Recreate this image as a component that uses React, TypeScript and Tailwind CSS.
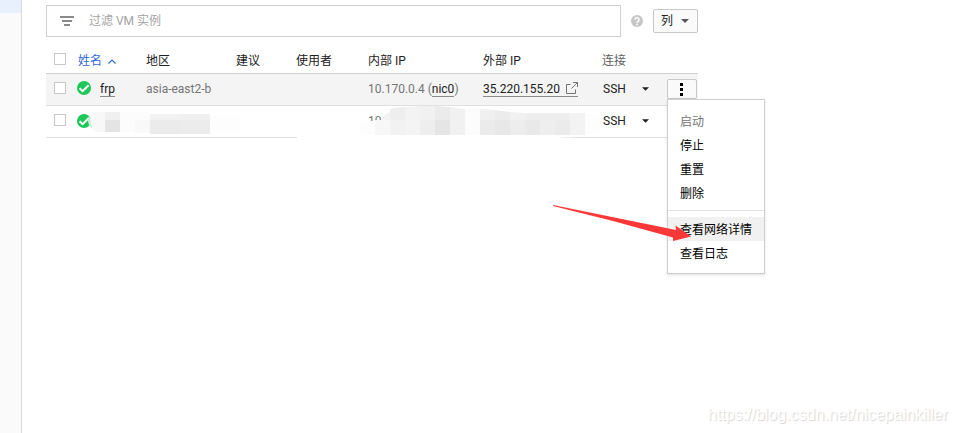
import { useState } from 'react';

interface Instance {
  id: string;
  name?: string;
  zone?: string;
  internalIp?: string;
  nic?: string;
  externalIp?: string;
}

const instances: Instance[] = [
  { id: 'vm-1', name: 'frp', zone: 'asia-east2-b', internalIp: '10.170.0.4', nic: 'nic0', externalIp: '35.220.155.20' },
  { id: 'vm-2', internalIp: '10' },
];

// x, y, width, height, fill
const maskTiles: [number, number, number, number, string][] = [
  [105, 112, 15, 8, '#f0f0f0'],
  [105, 120, 15, 12, '#e4e4e4'],
  [120, 112, 30, 20, '#fcfcfc'],
  [135, 120, 15, 13, '#f9f9f9'],
  [150, 114, 30, 6, '#f2f2f2'],
  [150, 120, 30, 14, '#ebebeb'],
  [180, 114, 30, 6, '#f0f0f0'],
  [180, 120, 30, 14, '#ececec'],
  [210, 115, 30, 18, '#fdfdfd'],
  [360, 121, 15, 14, '#fdfdfd'],
  [375, 120, 15, 15, '#f7f7f7'],
  [390, 120, 15, 15, '#f2f2f2'],
  [405, 120, 15, 15, '#f4f4f4'],
  [420, 120, 15, 15, '#eeeeee'],
  [435, 120, 15, 15, '#e5e5e5'],
  [450, 120, 15, 15, '#f1f1f1'],
  [465, 108, 15, 27, '#fcfcfc'],
  [480, 120, 15, 15, '#ebebeb'],
  [495, 120, 15, 15, '#e8e8e8'],
  [510, 120, 15, 15, '#ededed'],
  [525, 120, 15, 15, '#e9e9e9'],
  [540, 120, 15, 15, '#eeeeee'],
  [555, 120, 15, 15, '#ebebeb'],
  [570, 120, 15, 15, '#f3f3f3'],
];

function Check({ label }: { label: string }) {
  return (
    <input
      type="checkbox"
      aria-label={label}
      className="block h-3 w-3 appearance-none border border-[#c8c8c8] bg-white checked:bg-[#3367d6]"
    />
  );
}

function Caret({ className }: { className?: string }) {
  return (
    <svg viewBox="0 0 8 4" className={className} fill="currentColor" aria-hidden="true">
      <path d="M0 0h8L4 4z" />
    </svg>
  );
}

function RunningIcon() {
  return (
    <svg viewBox="0 0 14 14" className="block h-3.5 w-3.5 shrink-0" aria-label="正在运行">
      <circle cx="7" cy="7" r="7" fill="#1ec75a" />
      <path d="M2.600 7.200 5.600 10.200 11.600 4.200" fill="none" stroke="#fff" strokeWidth="2" />
    </svg>
  );
}

function RedactionMask() {
  return (
    <svg
      viewBox="46 104 652 38"
      className="pointer-events-none absolute -bottom-1 left-0 w-full"
      aria-hidden="true"
    >
      <path d="M297 121h279v16l-60 3H297z" fill="#fff" />
      <path d="M88 117q-1 7 4 12l2-12z" fill="#c9efd6" />
      <path d="M93 112h12v20h-9q-9-8-3-20z" fill="#f7f8f7" />
      <path d="M382 120q1-6 8-8v8z" fill="#f3f3f3" />
      <path d="M390 109q7-2 15-2v13h-15z" fill="#eeeeee" />
      <path d="M405 107l15-1v14h-15z" fill="#f3f3f3" />
      <path d="M420 106h15v14h-15z" fill="#f1f1f1" />
      <path d="M435 106l15 1v13h-15z" fill="#ebebeb" />
      <path d="M450 107l15 2v11h-15z" fill="#f1f1f1" />
      <path d="M480 109l15 1v10h-15z" fill="#f0f0f0" />
      <path d="M495 110l15 2v8h-15z" fill="#ececec" />
      <path d="M510 112l15 1v7h-15z" fill="#f1f1f1" />
      <path d="M525 113h45v7h-45z" fill="#eeeeee" />
      <path d="M570 113h15v7h-15z" fill="#f3f3f3" />
      <path d="M585 113l15 4v14l-15 4z" fill="#fdfdfd" />
      {maskTiles.map(([x, y, w, h, fill]) => (
        <rect key={`${x}-${y}`} x={x} y={y} width={w} height={h} fill={fill} />
      ))}
    </svg>
  );
}

function ActionsMenu() {
  const item = 'block h-6 w-full px-3 pt-0.5 text-left whitespace-nowrap hover:bg-[#f1f1f1]';
  return (
    <div role="menu" className="absolute top-full left-0 z-10 w-[98px] border border-[#d0d0d0] bg-white pt-[9px] pb-2 text-black shadow-sm">
      <button role="menuitem" disabled className="block h-6 w-full px-3 pt-0.5 text-left text-[#757575]">启动</button>
      <button role="menuitem" className={item}>停止</button>
      <button role="menuitem" className={item}>重置</button>
      <button role="menuitem" className={item}>删除</button>
      <hr className="mt-[5px] mb-1.5 border-[#e3e3e3]" />
      <button role="menuitem" className="block h-6 w-full bg-[#f1f1f1] px-3 pt-0.5 text-left whitespace-nowrap">查看网络详情</button>
      <button role="menuitem" className={item}>查看日志</button>
    </div>
  );
}

function InstanceRow({ vm, menuOpen, onToggle }: { vm: Instance; menuOpen: boolean; onToggle: () => void }) {
  const link = 'inline-block h-4 border-b border-[#8a8a8a] leading-4 text-[#212121]';
  return (
    <tr className={`h-8 border-b border-[#e0e0e0] text-[#757575] ${vm.name ? 'bg-[#f4f4f4]' : ''}`}>
      <td className="p-0 pb-0.5 pl-2"><Check label={vm.name ?? '实例'} /></td>
      <td className="p-0">
        <div className="-ml-px flex items-start gap-[9px]">
          <RunningIcon />
          {vm.name && <a href="#frp" className={link}>{vm.name}</a>}
        </div>
      </td>
      <td className="p-0">{vm.zone}</td>
      <td className="p-0" />
      <td className="p-0" />
      <td className="p-0 whitespace-nowrap">
        {vm.internalIp}
        {vm.nic && <> (<a href="#nic0" className={link}>{vm.nic}</a>)</>}
      </td>
      <td className="p-0">
        {vm.externalIp && (
          <a href="#external" className={`${link} whitespace-nowrap`}>
            {vm.externalIp}
            <svg viewBox="0 0 12 12" className="ml-1.5 inline-block h-3 w-3 -translate-y-0.5" fill="none" stroke="#757575" aria-hidden="true">
              <path d="M4.5 2.5h-4v9h9v-4M7 .5h4.5V5M11.5.5l-6 6" />
            </svg>
          </a>
        )}
      </td>
      <td className="p-0 pl-px">
        <button className="flex items-center gap-4 text-[#212121]">
          SSH
          <Caret className="h-1 w-[7px]" />
        </button>
      </td>
      <td className="p-0">
        {vm.name && (
          <div className="relative">
            <button
              aria-label="更多操作"
              aria-expanded={menuOpen}
              onClick={onToggle}
              className="flex h-5 w-[30px] items-center justify-center rounded-xs border border-[#c8c8c8] bg-[#fafafa]"
            >
              <svg viewBox="0 0 4 14" className="h-3.5 w-1" aria-hidden="true">
                <path d="M0 1h3v3H0zM0 6h3v3H0zM0 11h3v3H0z" />
              </svg>
            </button>
            {menuOpen && <ActionsMenu />}
          </div>
        )}
      </td>
    </tr>
  );
}

function App() {
  const [filter, setFilter] = useState('');
  const [menuOpen, setMenuOpen] = useState(true);

  return (
    <div className="relative flex min-h-screen bg-white font-['Roboto','Noto_Sans_CJK_SC',sans-serif] text-xs text-[#212121]">
      <aside className="w-[22px] shrink-0 border-r border-[#dadada] bg-[#fafafa]">
        <div className="h-[13px] bg-[#e8f0fe]" />
      </aside>

      <main className="min-w-0 flex-1 pt-[5px] pl-6">
        <div className="w-full max-w-[652px]">
          <div className="flex items-center">
            <label className="flex h-8 flex-1 items-center gap-[15px] border border-[#cfcfcf] px-[13px]">
              <svg viewBox="0 0 14 10" className="h-2.5 w-3.5 shrink-0" fill="#8a8a8a" aria-hidden="true">
                <path d="M0 0h14v2H0zM2 4h10v2H2zM4 8h6v2H4z" />
              </svg>
              <input
                type="text"
                aria-label="过滤 VM 实例"
                placeholder="过滤 VM 实例"
                value={filter}
                onChange={(e) => setFilter(e.target.value)}
                className="min-w-0 flex-1 outline-none placeholder:text-[#a3a3a3]"
              />
            </label>
            <button aria-label="帮助" className="ml-2.5">
              <svg viewBox="0 0 12 12" className="block h-3 w-3" aria-hidden="true">
                <circle cx="6" cy="6" r="6" fill="#c6c6c6" />
                <path d="M4 4.700a2 2 0 1 1 3.100 1.600Q6 7 6 7.700" fill="none" stroke="#fff" strokeWidth="1.500" />
                <circle cx="6" cy="9.500" r=".9" fill="#fff" />
              </svg>
            </button>
            <button className="ml-2.5 flex h-6 w-[45px] items-center justify-between rounded-xs border border-[#c8c8c8] bg-[#fafafa] pr-2 pl-[7px]">
              列
              <Caret className="h-1 w-2 text-[#555]" />
            </button>
          </div>

          <div className="relative mt-[11px]">
            <table className="w-full table-fixed border-collapse text-left">
              <colgroup>
                <col className="w-8" />
                <col className="w-[68px]" />
                <col className="w-[90px]" />
                <col className="w-[60px]" />
                <col className="w-[72px]" />
                <col className="w-[115px]" />
                <col className="w-[119px]" />
                <col className="w-[65px]" />
                <col />
              </colgroup>
              <thead>
                <tr className="h-[25px] border-b border-[#cfcfcf]">
                  <th className="p-0 pb-0.5 pl-2"><Check label="全选" /></th>
                  <th className="p-0 pt-0.5 font-normal">
                    <button className="flex items-center gap-1.5 text-[#3367d6]">
                      姓名
                      <svg viewBox="0 0 8 5" className="h-[5px] w-2" fill="none" stroke="currentColor" strokeWidth="1.2" aria-hidden="true">
                        <path d="M.5 4.500 4 1l3.500 3.500" />
                      </svg>
                    </button>
                  </th>
                  <th className="p-0 pt-0.5 font-normal">地区</th>
                  <th className="p-0 pt-0.5 font-normal">建议</th>
                  <th className="p-0 pt-0.5 font-normal">使用者</th>
                  <th className="p-0 pt-0.5 font-normal">内部 IP</th>
                  <th className="p-0 pt-0.5 font-normal">外部 IP</th>
                  <th className="p-0 pt-0.5 font-normal text-[#616161]">连接</th>
                  <th className="p-0" />
                </tr>
              </thead>
              <tbody>
                {instances.map((vm) => (
                  <InstanceRow key={vm.id} vm={vm} menuOpen={menuOpen} onToggle={() => setMenuOpen(!menuOpen)} />
                ))}
              </tbody>
            </table>
            <RedactionMask />
          </div>
        </div>
      </main>

      {/* pointer to the network details entry */}
      <svg viewBox="0 0 138 38" className="pointer-events-none absolute top-[204px] left-[553px] z-20 h-[38px] w-[138px]" aria-hidden="true">
        <path d="M0 1 0 2 60 17 120 33.500 120 37 138 32.500 122.500 21.500 123 26z" fill="#fb3838" />
      </svg>

      <p className="absolute right-2.5 bottom-1.5 font-['Liberation_Sans',sans-serif] text-base text-white [text-shadow:1px_1px_1px_#d4d4d4]">
        https://blog.csdn.net/nicepainkiller
      </p>
    </div>
  );
}

export default App;
